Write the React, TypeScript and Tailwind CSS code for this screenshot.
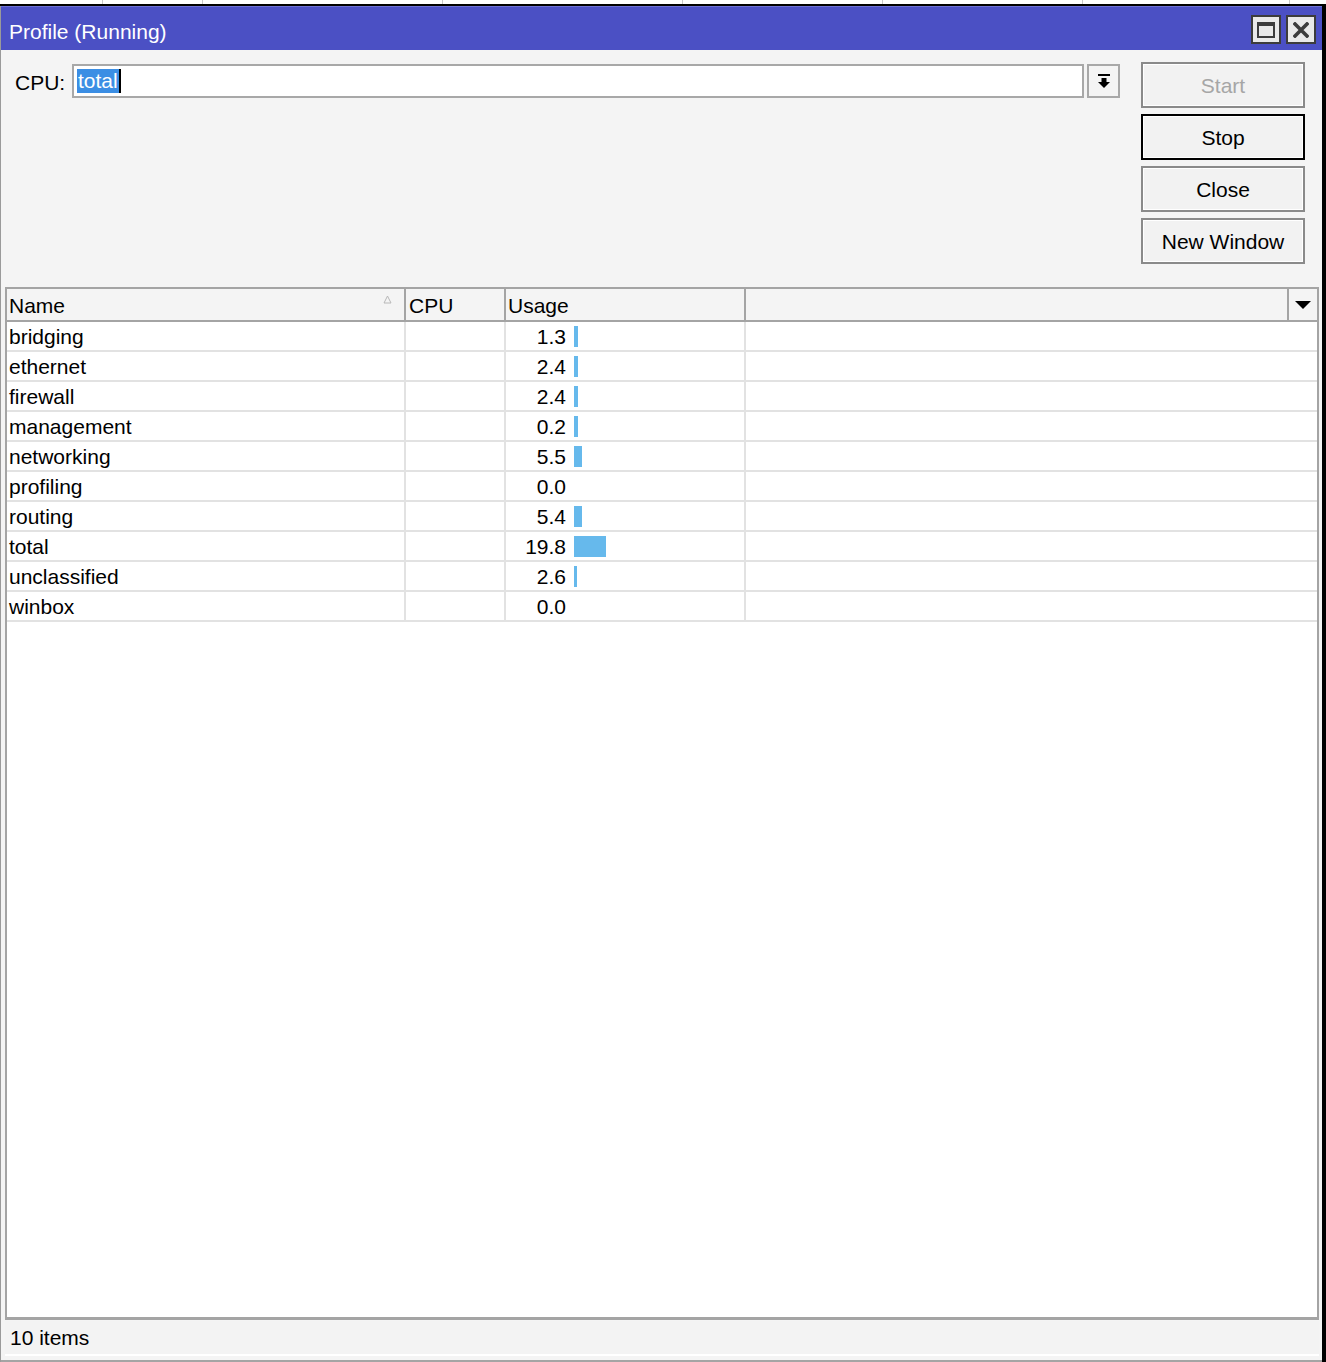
import React from "react";

const rows: { name: string; usage: string; bar: number }[] = [
  { name: "bridging", usage: "1.3", bar: 4 },
  { name: "ethernet", usage: "2.4", bar: 4 },
  { name: "firewall", usage: "2.4", bar: 4 },
  { name: "management", usage: "0.2", bar: 4 },
  { name: "networking", usage: "5.5", bar: 8 },
  { name: "profiling", usage: "0.0", bar: 0 },
  { name: "routing", usage: "5.4", bar: 8 },
  { name: "total", usage: "19.8", bar: 32 },
  { name: "unclassified", usage: "2.6", bar: 3 },
  { name: "winbox", usage: "0.0", bar: 0 },
];

const font = { fontFamily: '"Liberation Sans", Arial, sans-serif' };

function WinButton({ label, variant }: { label: string; variant?: "disabled" | "default" }) {
  const cls = variant === "default" ? "border-black" : "border-[#8a8a8a]";
  return (
    <button
      type="button"
      className={`h-[46px] w-[164px] border-2 ${cls} bg-[#f2f2f2] text-[21px] leading-none shadow-[inset_0_0_0_1px_#ffffff] ${
        variant === "disabled" ? "text-[#a6a6a6]" : "text-black"
      }`}
    >
      {label}
    </button>
  );
}

export default function App() {
  return (
    <div className="w-[1326px] h-[1362px] overflow-hidden bg-white text-black flex flex-col" style={font}>
      {/* window behind */}
      <div className="h-[4px] flex bg-white">
        <div className="w-[103px] border-r border-[#c8c8c8]" />
        <div className="w-[100px] border-r border-[#c8c8c8]" />
        <div className="w-[240px] border-r border-[#c8c8c8]" />
        <div className="w-[240px] border-r border-[#c8c8c8]" />
        <div className="w-[200px] border-r border-[#c8c8c8]" />
        <div className="w-[200px] border-r border-[#c8c8c8]" />
        <div className="w-[207px] border-r border-[#c8c8c8]" />
        <div className="flex-1" />
      </div>
      <div className="h-[2px] bg-black" />

      <div className="flex-1 flex border-r-4 border-black min-h-0">
        <div className="flex-1 flex flex-col bg-[#f4f4f4] border-l border-[#9a9a9a] min-w-0">
          {/* title bar */}
          <div className="h-[44px] bg-[#4b50c4] border-t border-[#6d71d4] flex items-center pl-[8px] pr-[6px]">
            <span className="text-white text-[21px] leading-none pt-[5px]">Profile (Running)</span>
            <div className="ml-auto flex gap-[5px] pt-[2px]">
              <div className="w-[30px] h-[29px] bg-[#e9e9e9] border-2 border-[#3c3c3c] flex items-center justify-center">
                <div className="w-[18px] h-[16px] border-2 border-t-[4px] border-[#3c3c3c]" />
              </div>
              <div className="w-[30px] h-[29px] bg-[#e9e9e9] border-2 border-[#3c3c3c] flex items-center justify-center">
                <svg width="16" height="16" viewBox="0 0 16 16">
                  <path d="M2 2 L14 14 M14 2 L2 14" stroke="#3c3c3c" strokeWidth="3.6" strokeLinecap="square" />
                </svg>
              </div>
            </div>
          </div>

          {/* form area */}
          <div className="h-[237px] flex pt-[12px] pl-[14px]">
            <div className="flex items-start pt-[2px]">
              <span className="text-[21px] leading-none mt-[8px] w-[57px]">CPU:</span>
              <div className="w-[1012px] h-[34px] bg-white border-2 border-[#a8a8a8] flex items-center pl-[3px]">
                <span className="bg-[#3b8ee4] text-white text-[21px] leading-[24px] px-[1px]">total</span>
                <span className="w-[2px] h-[24px] bg-black" />
              </div>
              <div className="ml-[3px] w-[33px] h-[34px] border-2 border-[#a8a8a8] bg-[#f4f4f4] flex items-center justify-center">
                <svg width="14" height="16" viewBox="0 0 14 16">
                  <rect x="1" y="1" width="12" height="2" fill="#000" />
                  <rect x="4.5" y="5" width="5" height="4" fill="#000" />
                  <path d="M1 9 L13 9 L7 15 Z" fill="#000" />
                </svg>
              </div>
            </div>
            <div className="ml-[21px] flex flex-col gap-[6px]">
              <WinButton label="Start" variant="disabled" />
              <WinButton label="Stop" variant="default" />
              <WinButton label="Close" />
              <WinButton label="New Window" />
            </div>
          </div>

          {/* table */}
          <div className="flex-1 min-h-0 ml-[4px] mr-[3px] bg-white border-2 border-b-[3px] border-[#a4a4a4] flex flex-col">
            <div className="h-[33px] flex bg-[#f4f4f4] border-b-2 border-[#a4a4a4] text-[21px] leading-none">
              <div className="w-[399px] border-r-2 border-[#a4a4a4] flex items-center pl-[2px] relative">
                <span className="pt-[1px]">Name</span>
                <svg className="absolute right-[12px] top-[6px]" width="9" height="9" viewBox="0 0 9 9">
                  <path d="M4.5 1 L8 8 L1 8 Z" fill="none" stroke="#b8b8b8" strokeWidth="1" />
                </svg>
              </div>
              <div className="w-[100px] border-r-2 border-[#a4a4a4] flex items-center pl-[3px]">
                <span className="pt-[1px]">CPU</span>
              </div>
              <div className="w-[240px] border-r-2 border-[#a4a4a4] flex items-center pl-[2px]">
                <span className="pt-[1px]">Usage</span>
              </div>
              <div className="flex-1 border-r-2 border-[#a4a4a4]" />
              <div className="w-[28px] flex items-center justify-center">
                <svg width="16" height="8" viewBox="0 0 16 8">
                  <path d="M0 0 L16 0 L8 8 Z" fill="#000" />
                </svg>
              </div>
            </div>
            {rows.map((r) => (
              <div key={r.name} className="h-[30px] flex border-b-2 border-[#e2e2e2] text-[21px] leading-none">
                <div className="w-[399px] border-r-2 border-[#e2e2e2] flex items-center pl-[2px]">
                  <span>{r.name}</span>
                </div>
                <div className="w-[100px] border-r-2 border-[#e2e2e2]" />
                <div className="w-[240px] border-r-2 border-[#e2e2e2] flex items-center">
                  <span className="w-[60px] text-right">{r.usage}</span>
                  {r.bar > 0 && (
                    <span className="ml-[8px] h-[21px] bg-[#66b9ec]" style={{ width: r.bar }} />
                  )}
                </div>
                <div className="flex-1" />
              </div>
            ))}
          </div>

          {/* status bar */}
          <div className="h-[40px] flex items-stretch pl-[4px] pr-[3px] pb-[4px] pt-[1px]">
            <div className="flex-1 flex items-center pl-[5px] border-b-2 border-white bg-[#f3f3f3] text-[21px] leading-none">
              <span>10 items</span>
            </div>
          </div>
          <div className="h-[2px] bg-[#a4a4a4]" />
        </div>
      </div>
    </div>
  );
}
